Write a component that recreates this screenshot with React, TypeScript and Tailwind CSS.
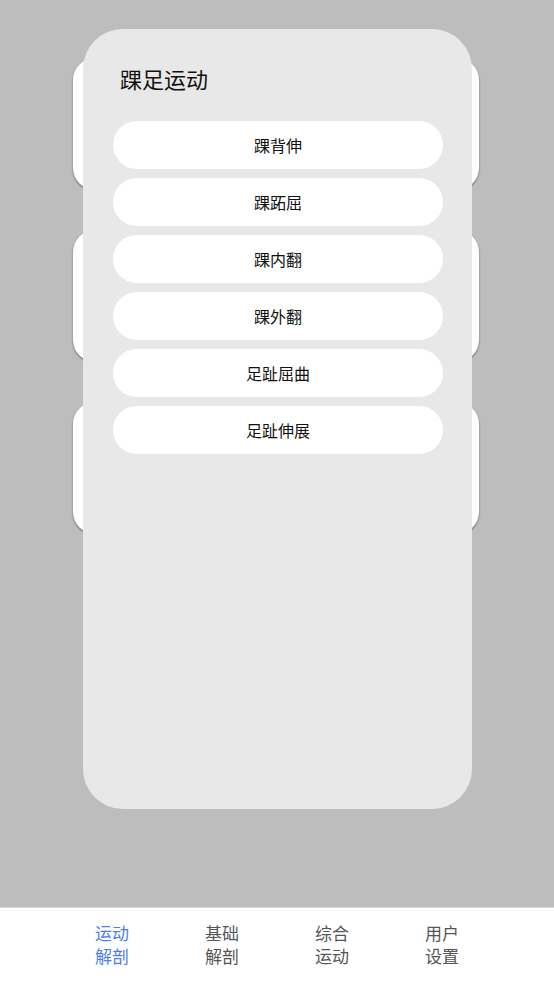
import React from "react";

const items = ["踝背伸", "踝跖屈", "踝内翻", "踝外翻", "足趾屈曲", "足趾伸展"];
const nav = [
  ["运动", "解剖"],
  ["基础", "解剖"],
  ["综合", "运动"],
  ["用户", "设置"],
];

export default function App() {
  return (
    <div
      className="relative flex h-[984px] w-full flex-col overflow-hidden bg-[#bdbdbd]"
      style={{ fontFamily: '"Noto Sans CJK SC", "Noto Sans", sans-serif' }}
    >
      <div className="flex flex-1 flex-col gap-[40px] pl-[73px] pt-[58px]">
        {[0, 1, 2].map((i) => (
          <div
            key={i}
            className="h-[132px] w-[406px] rounded-[22px] bg-white shadow-[0_1px_2px_rgba(0,0,0,0.5)]"
          />
        ))}
      </div>

      <div className="h-[77px] border-t border-[#d4d4d4] bg-white">
        <div className="mx-auto grid w-[440px] grid-cols-4 pt-[13px]">
          {nav.map((n, i) => (
            <div
              key={i}
              className={`flex flex-col items-center text-[17px] leading-[23px] ${
                i === 0 ? "text-[#4b7bf5]" : "text-[#555555]"
              }`}
            >
              <span>{n[0]}</span>
              <span>{n[1]}</span>
            </div>
          ))}
        </div>
      </div>

      <div className="absolute left-[83px] top-[29px] flex h-[780px] w-[389px] flex-col rounded-[40px] bg-[#e8e8e8] pl-[30px] pt-[34px]">
        <div className="pl-[7px] text-[22px] leading-[30px] text-[#111111]">踝足运动</div>
        <div className="mt-[28px] flex w-[330px] flex-col gap-[9px]">
          {items.map((t) => (
            <div
              key={t}
              className="flex h-[48px] items-center justify-center rounded-full bg-white text-[16px] text-[#111111]"
            >
              {t}
            </div>
          ))}
        </div>
      </div>
    </div>
  );
}
